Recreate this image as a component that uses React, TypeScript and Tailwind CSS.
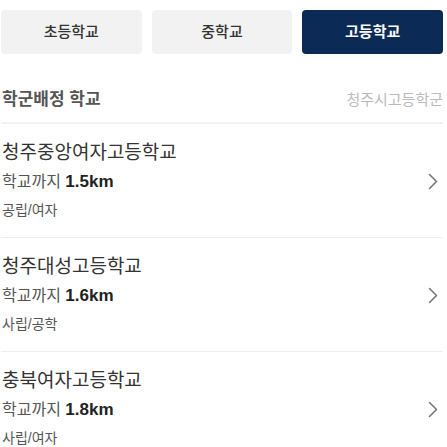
import { useState } from "react";

const TABS = ["초등학교", "중학교", "고등학교"];

interface School {
  name: string;
  distance: string;
  kind: string;
}

const SCHOOLS: School[] = [
  { name: "청주중앙여자고등학교", distance: "1.5km", kind: "공립/여자" },
  { name: "청주대성고등학교", distance: "1.6km", kind: "사립/공학" },
  { name: "충북여자고등학교", distance: "1.8km", kind: "사립/여자" },
];

function Chevron() {
  return (
    <svg width="10" height="17" viewBox="0 0 10 17" fill="none">
      <path
        d="M1.5 1.5 L8.5 8.5 L1.5 15.5"
        stroke="#777"
        strokeWidth="1.6"
        strokeLinecap="round"
        strokeLinejoin="round"
      />
    </svg>
  );
}

export default function App() {
  const [tab, setTab] = useState(2);

  return (
    <div
      className="min-h-[447px] w-[447px] bg-white pl-[1px] pr-[4px] pt-[10px]"
      style={{
        fontFamily: '"Liberation Sans", "Noto Sans CJK KR", sans-serif',
      }}
    >
      <div className="grid grid-cols-3 gap-[10px]">
        {TABS.map((t, i) => (
          <button
            key={t}
            onClick={() => setTab(i)}
            className={`h-[44px] rounded-[4px] text-[15px] ${
              tab === i
                ? "bg-[#0b2b56] font-bold text-white"
                : "bg-[#f2f2f2] font-medium text-[#333]"
            }`}
          >
            {t}
          </button>
        ))}
      </div>

      <div className="mt-[34px] flex items-center justify-between border-b-2 border-[#f1f1f1] pb-[10px] pl-[1px]">
        <span className="text-[17px] font-bold leading-[24px] text-[#555]">
          학군배정 학교
        </span>
        <span className="text-[15px] leading-[24px] text-[#bbb]">
          청주시고등학군
        </span>
      </div>

      {SCHOOLS.map((s, i) => (
        <div
          key={s.name}
          className={`flex items-center justify-between pb-[14px] pl-[1px] pr-[5px] pt-[15px] ${
            i < SCHOOLS.length - 1 ? "border-b border-[#eeeeee]" : ""
          }`}
        >
          <div className="flex flex-col">
            <span className="text-[19px] leading-[28px] text-[#333]">
              {s.name}
            </span>
            <span className="text-[16px] leading-[30px] text-[#555]">
              학교까지{" "}
              <b className="text-[17px] font-bold text-[#222]">{s.distance}</b>
            </span>
            <span className="text-[14px] leading-[26px] text-[#555]">
              {s.kind}
            </span>
          </div>
          <Chevron />
        </div>
      ))}
    </div>
  );
}
